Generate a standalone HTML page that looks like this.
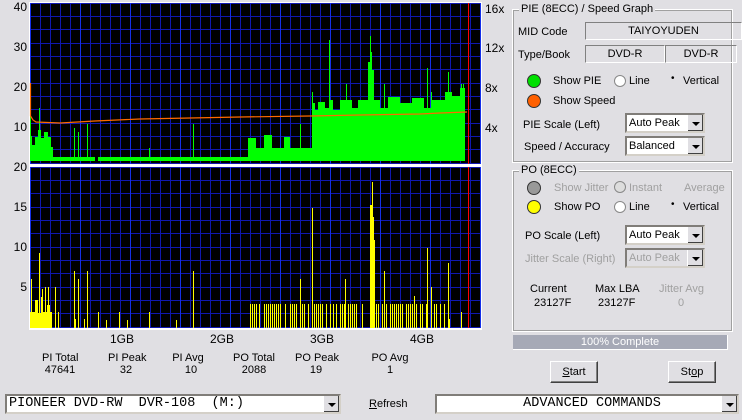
<!DOCTYPE html>
<html><head><style>
body{margin:0;width:742px;height:420px;background:#e0dfe3;font-family:"Liberation Sans",sans-serif;font-size:11px;color:#000;position:relative;overflow:hidden}
.a{position:absolute;white-space:nowrap}
.gb{position:absolute;border:1px solid #fff;outline:1px solid #a0a0a0;outline-offset:-2px}
.gt{position:absolute;background:#e0dfe3;padding:0 2px;top:-7px;left:6px}
.sunk{position:absolute;border-top:1px solid #808080;border-left:1px solid #808080;border-right:1px solid #fff;border-bottom:1px solid #fff;text-align:center;line-height:16px}
.combo{position:absolute;background:#fff;border:2px inset #d4d0c8;height:16px;line-height:16px;padding-left:2px}
.arr{position:absolute;right:0;top:0;width:15px;height:16px;background:#e0dfe3;border-left:1px solid #fff;box-shadow:inset -1px -1px #404040;}
.arr:after{content:"";position:absolute;left:4px;top:7px;border-left:4px solid transparent;border-right:4px solid transparent;border-top:4px solid #000}
.btn{position:absolute;background:#e0dfe3;border:1px solid #fff;border-right-color:#404040;border-bottom-color:#404040;box-shadow:inset -1px -1px #808080;text-align:center;line-height:20px}
.dot{position:absolute;width:12px;height:12px;border-radius:50%;border:1px solid #333}
.rad{position:absolute;width:10px;height:10px;border-radius:50%;background:#fff;border:1px solid #888}
.mono{font-family:"Liberation Mono",monospace;font-size:13.5px;white-space:pre}
</style></head><body>
<svg class="a" style="left:0;top:0" width="512" height="350" xmlns="http://www.w3.org/2000/svg" shape-rendering="crispEdges">
<defs>
<pattern id="g1" x="30" y="3" width="10" height="40" patternUnits="userSpaceOnUse"><rect width="10" height="40" fill="#000"/><path d="M0.5 0V40M0 0.5H10M0 13.5H10M0 26.5H10" stroke="#1018b0" stroke-width="1"/></pattern>
<pattern id="g2" x="30" y="167" width="10" height="40" patternUnits="userSpaceOnUse"><rect width="10" height="40" fill="#000"/><path d="M0.5 0V40M0 0.5H10M0 13.5H10M0 26.5H10" stroke="#1018b0" stroke-width="1"/></pattern>
</defs>
<g font-size="12" font-family="Liberation Sans" shape-rendering="auto">
<text x="27" y="11" text-anchor="end">40</text>
<text x="27" y="51" text-anchor="end">30</text>
<text x="27" y="91" text-anchor="end">20</text>
<text x="27" y="131" text-anchor="end">10</text>
<text x="27" y="171" text-anchor="end">20</text>
<text x="27" y="211" text-anchor="end">15</text>
<text x="27" y="251" text-anchor="end">10</text>
<text x="27" y="291" text-anchor="end">5</text>
<text x="485" y="13">16x</text>
<text x="485" y="52">12x</text>
<text x="485" y="92">8x</text>
<text x="485" y="132">4x</text>
</g>
<rect x="29" y="2" width="453" height="163" fill="#fff"/>
<rect x="30" y="3" width="451" height="161" fill="url(#g1)"/>
<rect x="29" y="165" width="453" height="165" fill="#fff"/>
<rect x="30" y="167" width="451" height="161" fill="url(#g2)"/>
<g stroke="#1530e8" stroke-width="1">
<path d="M30.5 3V164M80.5 3V164M130.5 3V164M180.5 3V164M230.5 3V164M280.5 3V164M330.5 3V164M380.5 3V164M430.5 3V164M480.5 3V164"/>
<path d="M30.5 167V328M80.5 167V328M130.5 167V328M180.5 167V328M230.5 167V328M280.5 167V328M330.5 167V328M380.5 167V328M430.5 167V328M480.5 167V328"/>
</g>
<path fill="#00ff00" d="M30,161 L30,136 L32,136 L32,145 L35,145 L35,137 L38,137 L38,130 L41,130 L41,138 L44,138 L44,132 L48,132 L48,137 L51,137 L51,147 L53,147 L53,157 L95,157 L95,161 L98,161 L98,157 L248,157 L248,138 L256,138 L256,148 L264,148 L264,135 L272,135 L272,148 L284,148 L284,137 L290,137 L290,148 L312,148 L312,103 L315,103 L315,110 L318,110 L318,102 L325,102 L325,108 L330,108 L330,100 L333,100 L333,110 L340,110 L340,100 L352,100 L352,108 L358,108 L358,100 L368,100 L368,62 L372,62 L372,70 L374,70 L374,100 L380,100 L380,108 L388,108 L388,97 L400,97 L400,103 L412,103 L412,98 L424,98 L424,108 L432,108 L432,100 L445,100 L445,92 L452,92 L452,96 L460,96 L460,88 L465,88 L465,161 Z"/>
<g stroke="#00ff00" stroke-width="1">
<path d="M30.5 161V84M39.5 161V108M74.5 161V128M78.5 161V132M87.5 161V124M149.5 161V148M193.5 161V124M300.5 161V124M312.5 161V92M329.5 161V40M346.5 161V84M370.5 161V36M371.5 161V52M384.5 161V84M427.5 161V68M431.5 161V92M448.5 161V72M461.5 161V84M463.5 161V84"/>
</g>
<path d="M96 161H98" stroke="#000" stroke-width="2"/>
<polyline fill="none" stroke="#ff6a00" stroke-width="1.2" shape-rendering="auto" points="30.5,83 30.5,116 33,120 36,122 60,123 95,121 140,119 190,118 240,117 310,116 360,115 420,114 440,113 467,112"/>
<path d="M468.5 3V164M468.5 167V328" stroke="#ff0000" stroke-width="1"/>
<path fill="#ffff00" d="M30,328 L30,312 L35,312 L35,300 L38,300 L38,313 L41,313 L41,297 L43,297 L43,312 L47,312 L47,305 L50,305 L50,312 L52,312 L52,328 Z M370,328 L370,205 L372,205 L372,182 L373,182 L373,217 L374,217 L374,240 L375,240 L375,328 Z"/>
<path stroke="#ffff00" stroke-width="1" d="M31.5 328V279M39.5 328V253M42.5 328V289M45.5 328V287M48.5 328V287M55.5 328V287M58.5 328V312M74.5 328V271M75.5 328V319M78.5 328V279M84.5 328V319M87.5 328V271M98.5 328V312M106.5 328V320M119.5 328V312M127.5 328V320M149.5 328V312M176.5 328V320M193.5 328V271M300.5 328V279M312.5 328V208M345.5 328V279M384.5 328V271M427.5 328V248M431.5 328V287M448.5 328V263M449.5 328V319M461.5 328V312
M250.5 328V304M252.5 328V304M254.5 328V304M256.5 328V304M259.5 328V304M264.5 328V304M266.5 328V304M268.5 328V304M270.5 328V304M272.5 328V304M274.5 328V304M276.5 328V304M278.5 328V304M280.5 328V304M285.5 328V304M290.5 328V304M292.5 328V304M294.5 328V304M296.5 328V304M302.5 328V304M304.5 328V304M308.5 328V304M314.5 328V304M316.5 328V304M318.5 328V304M320.5 328V304M322.5 328V304M326.5 328V304M330.5 328V304M333.5 328V304M336.5 328V304M340.5 328V304M342.5 328V304M344.5 328V304M348.5 328V304M350.5 328V304M352.5 328V304M354.5 328V304M356.5 328V304M362.5 328V304M376.5 328V304M378.5 328V304M382.5 328V304M386.5 328V304M390.5 328V304M392.5 328V304M394.5 328V304M396.5 328V304M398.5 328V304M400.5 328V304M402.5 328V304M406.5 328V304M408.5 328V304M410.5 328V304M412.5 328V304M414.5 328V296M416.5 328V304M420.5 328V304M422.5 328V304M426.5 328V304M434.5 328V304M436.5 328V304M440.5 328V304M444.5 328V304"/>
<g font-size="12" font-family="Liberation Sans" text-anchor="middle" shape-rendering="auto">
<text x="122" y="343">1GB</text>
<text x="222" y="343">2GB</text>
<text x="322" y="343">3GB</text>
<text x="422" y="343">4GB</text>
</g>
</svg>

<div class="a" style="left:42px;top:352px;width:36px;text-align:center">PI Total<br>47641</div>
<div class="a" style="left:108px;top:352px;width:36px;text-align:center">PI Peak<br>32</div>
<div class="a" style="left:170px;top:352px;width:36px;text-align:center">PI Avg<br>&nbsp;&nbsp;10</div>
<div class="a" style="left:233px;top:352px;width:42px;text-align:center">PO Total<br>2088</div>
<div class="a" style="left:295px;top:352px;width:42px;text-align:center">PO Peak<br>19</div>
<div class="a" style="left:370px;top:352px;width:40px;text-align:center">PO Avg<br>1</div>

<div class="gb" style="left:512px;top:9px;width:219px;height:152px"><div class="gt">PIE (8ECC) / Speed Graph</div></div>
<div class="a" style="left:518px;top:26px">MID Code</div>
<div class="sunk" style="left:585px;top:22px;width:155px;height:16px">TAIYOYUDEN</div>
<div class="a" style="left:518px;top:49px">Type/Book</div>
<div class="sunk" style="left:585px;top:45px;width:78px;height:16px">DVD-R</div>
<div class="sunk" style="left:665px;top:45px;width:70px;height:16px">DVD-R</div>
<div class="dot" style="left:527px;top:74px;background:#00e000"></div>
<div class="a" style="left:553px;top:75px">Show PIE</div>
<div class="rad" style="left:614px;top:75px"></div><div class="a" style="left:629px;top:75px">Line</div>
<div class="a" style="left:671px;top:73px;font-size:10px">•</div><div class="a" style="left:683px;top:75px">Vertical</div>
<div class="dot" style="left:527px;top:94px;background:#ff6000"></div>
<div class="a" style="left:553px;top:95px">Show Speed</div>
<div class="a" style="left:523px;top:119px">PIE Scale (Left)</div>
<div class="combo" style="left:625px;top:113px;width:74px">Auto Peak<div class="arr"></div></div>
<div class="a" style="left:524px;top:141px">Speed / Accuracy</div>
<div class="combo" style="left:625px;top:136px;width:74px">Balanced<div class="arr"></div></div>

<div class="gb" style="left:512px;top:170px;width:219px;height:160px"><div class="gt">PO (8ECC)</div></div>
<div class="dot" style="left:527px;top:181px;background:#999"></div>
<div class="a" style="left:554px;top:182px;color:#a0a0a0">Show Jitter</div>
<div class="rad" style="left:614px;top:181px;background:#ddd"></div><div class="a" style="left:629px;top:182px;color:#a0a0a0">Instant</div>
<div class="a" style="left:684px;top:182px;color:#a0a0a0">Average</div>
<div class="dot" style="left:527px;top:200px;background:#ffff00"></div>
<div class="a" style="left:554px;top:201px">Show PO</div>
<div class="rad" style="left:614px;top:201px"></div><div class="a" style="left:629px;top:201px">Line</div>
<div class="a" style="left:671px;top:199px;font-size:10px">•</div><div class="a" style="left:683px;top:201px">Vertical</div>
<div class="a" style="left:525px;top:230px">PO Scale (Left)</div>
<div class="combo" style="left:625px;top:225px;width:74px">Auto Peak<div class="arr"></div></div>
<div class="a" style="left:525px;top:253px;color:#a0a0a0">Jitter Scale (Right)</div>
<div class="combo" style="left:625px;top:248px;width:74px;background:#e0dfe3;color:#a0a0a0">Auto Peak<div class="arr"></div></div>
<div class="a" style="left:530px;top:283px">Current</div><div class="a" style="left:534px;top:297px">23127F</div>
<div class="a" style="left:595px;top:283px">Max LBA</div><div class="a" style="left:598px;top:297px">23127F</div>
<div class="a" style="left:659px;top:283px;color:#a0a0a0">Jitter Avg</div><div class="a" style="left:678px;top:297px;color:#a0a0a0">0</div>
<div class="a" style="left:513px;top:335px;width:214px;height:14px;background:#a6a9b6;color:#fff;text-align:center;line-height:14px;border-right:1px solid #fff;border-bottom:1px solid #fff">100% Complete</div>
<div class="btn" style="left:550px;top:361px;width:46px;height:20px"><u>S</u>tart</div>
<div class="btn" style="left:668px;top:361px;width:46px;height:20px">St<u>o</u>p</div>

<div class="combo mono" style="left:5px;top:394px;width:330px">PIONEER DVD-RW  DVR-108  (M:)<div class="arr"></div></div>
<div class="a" style="left:369px;top:398px"><u>R</u>efresh</div>
<div class="combo mono" style="left:435px;top:394px;width:300px;text-align:center;padding-left:0"><span style="margin-left:10px">ADVANCED COMMANDS</span><div class="arr"></div></div>
</body></html>
